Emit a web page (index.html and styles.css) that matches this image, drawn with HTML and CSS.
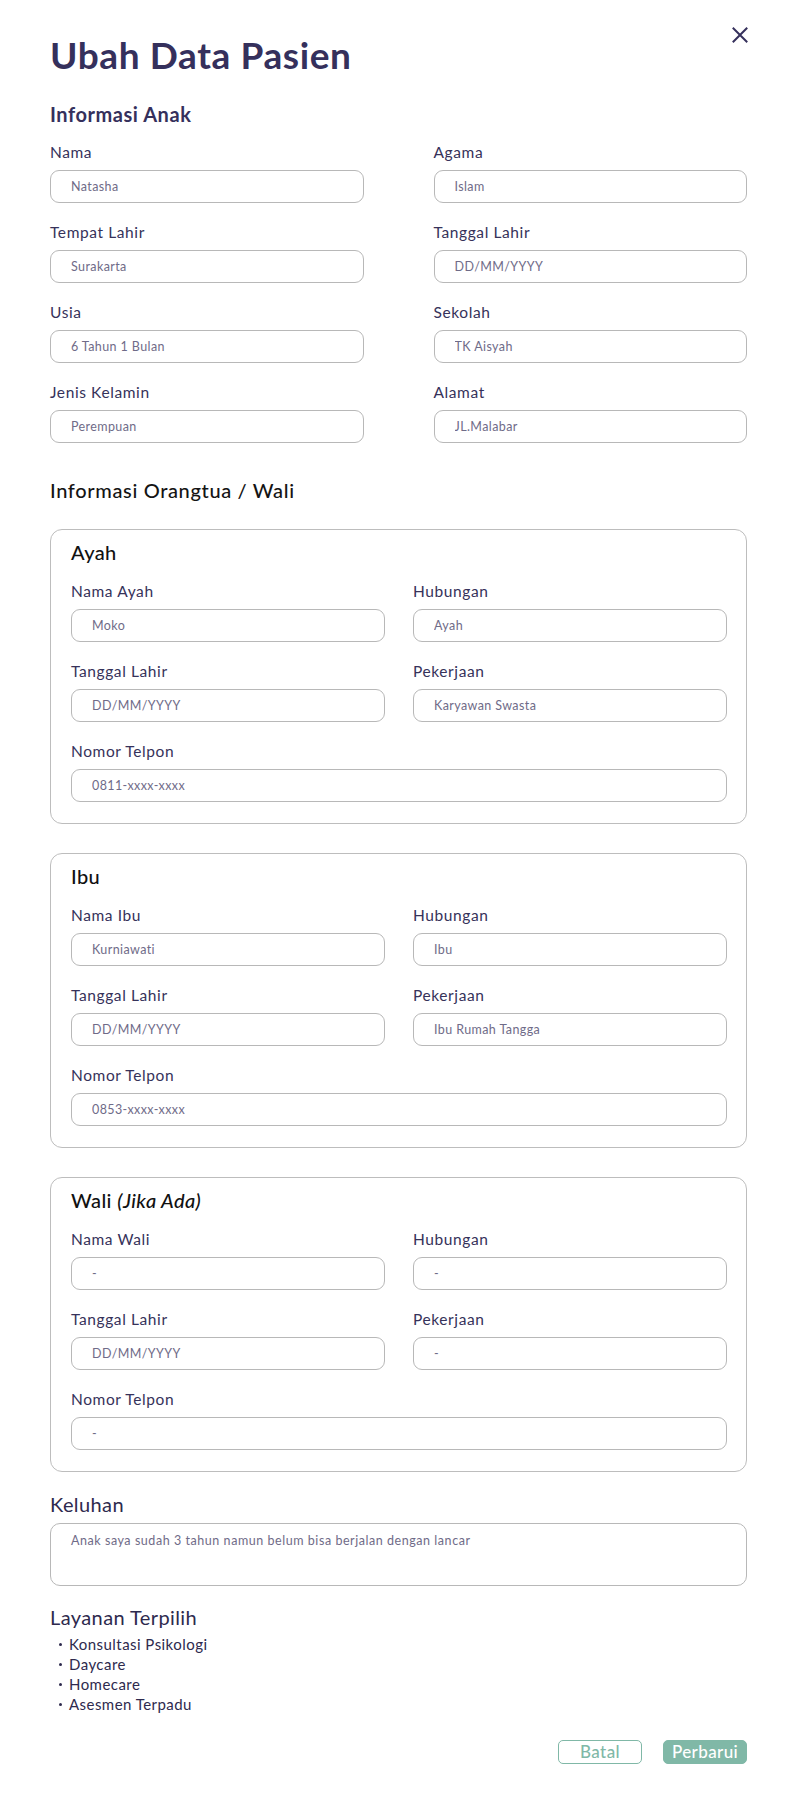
FILE: index.html
```html
<!DOCTYPE html>
<html lang="id">
<head>
<meta charset="utf-8">
<title>Ubah Data Pasien</title>
<link rel="stylesheet" href="styles.css">
</head>
<body>
<main class="page">
  <header class="page-header">
    <h1 class="page-title">Ubah Data Pasien</h1>
    <button class="close-btn" aria-label="Tutup">
      <svg width="16" height="16" viewBox="0 0 16 16"><path d="M1.5 1.5 L14.5 14.5 M14.5 1.5 L1.5 14.5" stroke="#35305c" stroke-width="2" stroke-linecap="square"/></svg>
    </button>
  </header>

  <section class="child-section">
    <h2 class="section-title">Informasi Anak</h2>
    <div class="grid grid-wide">
      <label class="field"><span class="field-label">Nama</span><input class="field-input" type="text" value="Natasha"></label>
      <label class="field"><span class="field-label">Agama</span><input class="field-input" type="text" value="Islam"></label>
      <label class="field"><span class="field-label">Tempat Lahir</span><input class="field-input" type="text" value="Surakarta"></label>
      <label class="field"><span class="field-label">Tanggal Lahir</span><input class="field-input" type="text" value="DD/MM/YYYY"></label>
      <label class="field"><span class="field-label">Usia</span><input class="field-input" type="text" value="6 Tahun 1 Bulan"></label>
      <label class="field"><span class="field-label">Sekolah</span><input class="field-input" type="text" value="TK Aisyah"></label>
      <label class="field"><span class="field-label">Jenis Kelamin</span><input class="field-input" type="text" value="Perempuan"></label>
      <label class="field"><span class="field-label">Alamat</span><input class="field-input" type="text" value="JL.Malabar"></label>
    </div>
  </section>

  <section class="parent-section">
    <h2 class="section-title section-title-dark">Informasi Orangtua / Wali</h2>

    <div class="card">
      <h3 class="card-title">Ayah</h3>
      <div class="grid grid-card">
        <label class="field"><span class="field-label">Nama Ayah</span><input class="field-input" type="text" value="Moko"></label>
        <label class="field"><span class="field-label">Hubungan</span><input class="field-input" type="text" value="Ayah"></label>
        <label class="field"><span class="field-label">Tanggal Lahir</span><input class="field-input" type="text" value="DD/MM/YYYY"></label>
        <label class="field"><span class="field-label">Pekerjaan</span><input class="field-input" type="text" value="Karyawan Swasta"></label>
        <label class="field field-full"><span class="field-label">Nomor Telpon</span><input class="field-input" type="text" value="0811-xxxx-xxxx"></label>
      </div>
    </div>

    <div class="card">
      <h3 class="card-title">Ibu</h3>
      <div class="grid grid-card">
        <label class="field"><span class="field-label">Nama Ibu</span><input class="field-input" type="text" value="Kurniawati"></label>
        <label class="field"><span class="field-label">Hubungan</span><input class="field-input" type="text" value="Ibu"></label>
        <label class="field"><span class="field-label">Tanggal Lahir</span><input class="field-input" type="text" value="DD/MM/YYYY"></label>
        <label class="field"><span class="field-label">Pekerjaan</span><input class="field-input" type="text" value="Ibu Rumah Tangga"></label>
        <label class="field field-full"><span class="field-label">Nomor Telpon</span><input class="field-input" type="text" value="0853-xxxx-xxxx"></label>
      </div>
    </div>

    <div class="card">
      <h3 class="card-title">Wali <em>(Jika Ada)</em></h3>
      <div class="grid grid-card">
        <label class="field"><span class="field-label">Nama Wali</span><input class="field-input" type="text" value="-"></label>
        <label class="field"><span class="field-label">Hubungan</span><input class="field-input" type="text" value="-"></label>
        <label class="field"><span class="field-label">Tanggal Lahir</span><input class="field-input" type="text" value="DD/MM/YYYY"></label>
        <label class="field"><span class="field-label">Pekerjaan</span><input class="field-input" type="text" value="-"></label>
        <label class="field field-full"><span class="field-label">Nomor Telpon</span><input class="field-input" type="text" value="-"></label>
      </div>
    </div>
  </section>

  <section class="complaint-section">
    <h2 class="plain-title">Keluhan</h2>
    <textarea class="complaint-input">Anak saya sudah 3 tahun namun belum bisa berjalan dengan lancar</textarea>
  </section>

  <section class="service-section">
    <h2 class="plain-title">Layanan Terpilih</h2>
    <ul class="service-list">
      <li>Konsultasi Psikologi</li>
      <li>Daycare</li>
      <li>Homecare</li>
      <li>Asesmen Terpadu</li>
    </ul>
  </section>

  <footer class="actions">
    <button class="btn btn-outline">Batal</button>
    <button class="btn btn-solid">Perbarui</button>
  </footer>
</main>
</body>
</html>
```

FILE: styles.css
```css
* { box-sizing: border-box; }

body {
  margin: 0;
  background: #ffffff;
  font-family: Lato, "Noto Sans", "Liberation Sans", sans-serif;
  color: #35305c;
}

.page {
  width: 788px;
  padding: 33px 41px 40px 50px;
}

.page-header {
  display: flex;
  justify-content: space-between;
  align-items: flex-start;
}

.page-title {
  margin: 0;
  font-size: 37px;
  line-height: 44px;
  font-weight: 700;
  letter-spacing: 0.6px;
  color: #35305c;
}

.close-btn {
  margin: -6px -1px 0 0;
  padding: 0;
  width: 16px;
  height: 16px;
  border: none;
  background: none;
  display: flex;
}

.child-section { margin-top: 25px; }

.section-title {
  margin: 0 0 16px;
  font-size: 20px;
  line-height: 24px;
  font-weight: 700;
  letter-spacing: 0.55px;
  color: #35305c;
}

.section-title-dark {
  font-weight: 500;
  letter-spacing: 0.65px;
  color: #141414;
  margin-bottom: 27px;
}

.grid {
  display: grid;
  grid-template-columns: 1fr 1fr;
  row-gap: 19px;
}

.grid-wide { column-gap: 70px; }
.grid-card { column-gap: 28px; }

.field {
  display: flex;
  flex-direction: column;
  gap: 8px;
}

.field-full { grid-column: 1 / -1; }

.field-label {
  font-size: 15.5px;
  line-height: 20px;
  letter-spacing: 0.6px;
  color: #36325a;
}

.field-input {
  height: 33px;
  width: 100%;
  padding: 0 20px;
  border: 1px solid #b8b8b8;
  border-radius: 9px;
  font-family: inherit;
  font-size: 12.5px;
  letter-spacing: 0.4px;
  color: #6f6b88;
  background: #fff;
  outline: none;
}

.parent-section { margin-top: 35px; }

.card {
  border: 1px solid #bdbdbd;
  border-radius: 12px;
  padding: 10px 19px 21px 20px;
  margin-bottom: 29px;
}

.card:last-child { margin-bottom: 0; }

.card-title {
  margin: 0 0 17px;
  font-size: 20px;
  line-height: 24px;
  font-weight: 500;
  letter-spacing: 0.4px;
  color: #111111;
}

.card-title em { font-style: italic; }

.complaint-section { margin-top: 20px; }

.plain-title {
  margin: 0;
  font-size: 20px;
  line-height: 24px;
  font-weight: 400;
  letter-spacing: 0.4px;
  color: #2e2a4e;
}

.complaint-input {
  display: block;
  margin-top: 7px;
  width: 100%;
  height: 63px;
  padding: 8px 20px;
  border: 1px solid #b8b8b8;
  border-radius: 10px;
  font-family: inherit;
  font-size: 12.5px;
  line-height: 18px;
  letter-spacing: 0.55px;
  color: #6f6b88;
  resize: none;
  outline: none;
}

.service-section { margin-top: 19px; }

.service-list {
  margin: 5px 0 0;
  padding: 0;
  list-style: none;
}

.service-list li {
  position: relative;
  padding-left: 19px;
  font-size: 15px;
  line-height: 20px;
  letter-spacing: 0.45px;
  color: #2e2a4e;
}

.service-list li::before {
  content: "";
  position: absolute;
  left: 9px;
  top: 9px;
  width: 3px;
  height: 3px;
  border-radius: 50%;
  background: #2e2a4e;
}

.actions {
  margin-top: 26px;
  display: flex;
  justify-content: flex-end;
  gap: 21px;
}

.btn {
  width: 84px;
  height: 24px;
  padding: 0;
  border-radius: 5px;
  font-family: inherit;
  font-size: 17px;
  line-height: 22px;
  font-weight: 500;
  letter-spacing: 0.4px;
}

.btn-outline {
  background: #fff;
  border: 1px solid #80b8a7;
  color: #80b8a7;
}

.btn-solid {
  background: #80b8a7;
  border: 1px solid #80b8a7;
  color: #ffffff;
}
```
